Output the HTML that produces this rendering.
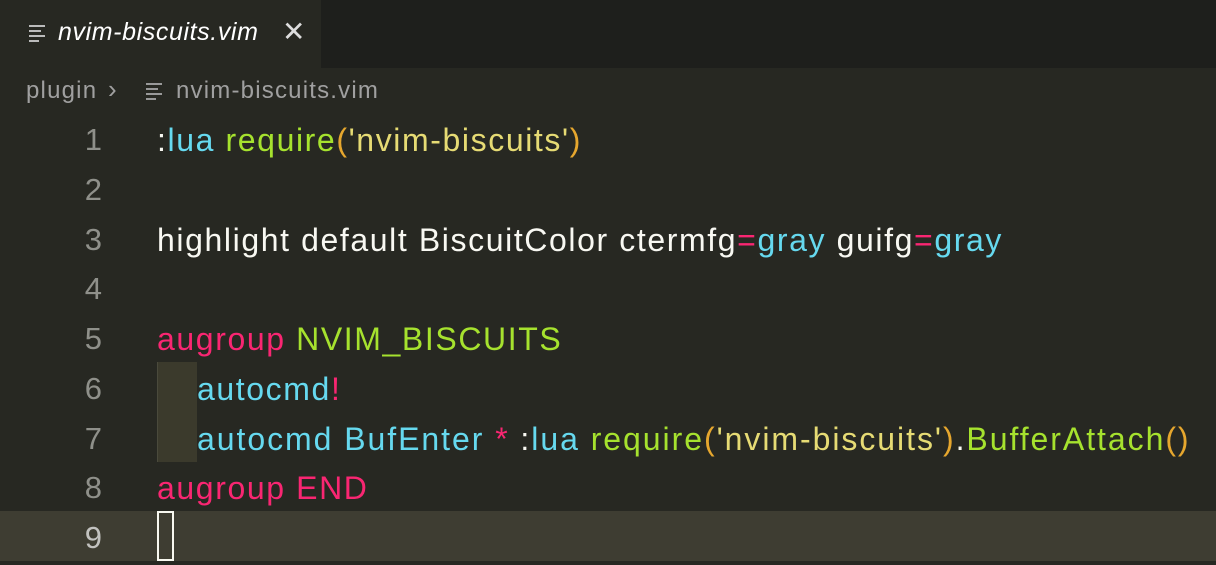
<!DOCTYPE html>
<html><head><style>
body{margin:0;width:1216px;height:565px;background:#272822;overflow:hidden;font-family:"Liberation Sans",sans-serif;position:relative}
.tabbar{position:absolute;left:0;top:0;width:1216px;height:68px;background:#1e1f1c}
.tab{position:absolute;left:0;top:0;width:321px;height:68px;background:#272822}
.ic{position:absolute;width:16px}
.ic i{display:block;height:2px;background:#bbb;margin-bottom:3px}
.tabt{position:absolute;left:58px;top:18px;font-size:25px;letter-spacing:0.6px;font-style:italic;color:#fff}
.x{position:absolute;left:282px;top:15px;font-size:28px;color:#ddd}
.bc{position:absolute;top:77px;font-size:24px;letter-spacing:1.2px;color:#a0a0a0}
.ln{position:absolute;left:58px;width:44px;text-align:right;font-size:31px;color:#8f908a}
.code{position:absolute;left:157px;font-size:32px;letter-spacing:1.6px;color:#f8f8f2;white-space:pre}
.c{color:#66d9ef}.g{color:#a6e22e}.y{color:#e6db74}.o{color:#e6a72e}.p{color:#f92672}
</style></head><body>
<div class="tabbar"><div class="tab">
<div class="ic" style="left:29px;top:25px"><i></i><i style="width:12px"></i><i></i><i style="width:10px"></i></div>
<div class="tabt">nvim-biscuits.vim</div><div class="x">✕</div></div></div>
<div class="bc" style="left:26px">plugin</div>
<div class="bc" style="left:108px;font-size:26px;top:74px">›</div>
<div class="ic" style="left:146px;top:83px"><i style="background:#999"></i><i style="background:#999;width:12px"></i><i style="background:#999"></i><i style="background:#999;width:10px"></i></div>
<div class="bc" style="left:176px">nvim-biscuits.vim</div>
<div style="position:absolute;left:0;top:511px;width:1216px;height:50px;background:#3e3d32"></div>
<div style="position:absolute;left:157px;top:362px;width:39px;height:100px;background:#3b3a2c;border-left:1px solid #4a4a3c"></div>
<div style="position:absolute;left:157px;top:511px;width:17px;height:50px;border:2px solid #f8f8f0;box-sizing:border-box"></div>
<div class="ln" style="top:122px">1</div><div class="ln" style="top:172px">2</div><div class="ln" style="top:222px">3</div><div class="ln" style="top:271px">4</div><div class="ln" style="top:321px">5</div><div class="ln" style="top:371px">6</div><div class="ln" style="top:421px">7</div><div class="ln" style="top:470px">8</div><div class="ln" style="top:520px;color:#c2c2bf">9</div>
<div class="code" style="top:122px">:<span class="c">lua</span> <span class="g">require</span><span class="o">(</span><span class="y">'nvim-biscuits'</span><span class="o">)</span></div>
<div class="code" style="top:222px">highlight default BiscuitColor ctermfg<span class="p">=</span><span class="c">gray</span> guifg<span class="p">=</span><span class="c">gray</span></div>
<div class="code" style="top:321px"><span class="p">augroup</span> <span class="g">NVIM_BISCUITS</span></div>
<div class="code" style="top:371px;left:197px"><span class="c">autocmd</span><span class="p">!</span></div>
<div class="code" style="top:421px;left:197px;letter-spacing:1.95px"><span class="c">autocmd BufEnter</span> <span class="p">*</span> :<span class="c">lua</span> <span class="g">require</span><span class="o">(</span><span class="y">'nvim-biscuits'</span><span class="o">)</span>.<span class="g">BufferAttach</span><span class="o">()</span></div>
<div class="code" style="top:470px"><span class="p">augroup END</span></div>
</body></html>
